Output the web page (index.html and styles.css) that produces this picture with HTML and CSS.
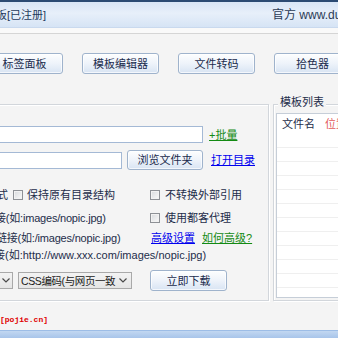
FILE: index.html
```html
<!DOCTYPE html>
<html lang="zh-CN">
<head>
<meta charset="utf-8">
<title>模板下载器</title>
<link rel="stylesheet" href="styles.css">
</head>
<body>
<div class="app">
  <header class="titlebar">
    <span class="title">模板[已注册]</span>
    <span class="site">官方 www.dukesoft.cn</span>
  </header>
  <div class="strip"></div>
  <nav class="toolbar">
    <button class="btn tool first">标签面板</button>
    <button class="btn tool">模板编辑器</button>
    <button class="btn tool">文件转码</button>
    <button class="btn tool">拾色器</button>
  </nav>
  <main class="main">
    <section class="group settings">
      <div class="row r1">
        <span class="input url"></span>
        <a class="link green l-batch">+批量</a>
      </div>
      <div class="row r2">
        <span class="input folder"></span>
        <button class="btn browse">浏览文件夹</button>
        <a class="link blue l-open">打开目录</a>
      </div>
      <div class="row r3">
        <div class="cell left">
          <span class="text cut-a">方式</span>
          <span class="check c-left"></span>
          <span class="text">保持原有目录结构</span>
        </div>
        <div class="cell">
          <span class="check c-right"></span>
          <span class="text">不转换外部引用</span>
        </div>
      </div>
      <div class="row r4">
        <div class="cell left">
          <span class="text tight cut-b">接(如:images/nopic.jpg)</span>
        </div>
        <div class="cell">
          <span class="check c-right"></span>
          <span class="text">使用都客代理</span>
        </div>
      </div>
      <div class="row r5">
        <div class="cell left">
          <span class="text tight cut-c">链接(如:/images/nopic.jpg)</span>
        </div>
        <div class="cell">
          <a class="link blue l-adv">高级设置</a>
          <a class="link green l-how">如何高级?</a>
        </div>
      </div>
      <div class="row r6">
        <span class="text cut-d">接(如:http://www.xxx.com/images/nopic.jpg)</span>
      </div>
      <div class="row r7">
        <div class="select sel-a">
          <span class="sel-text"></span>
          <svg class="chev" width="8" height="5" viewBox="0 0 8 5"><polyline points="0.5,0.5 4,4 7.5,0.5" fill="none" stroke="#4a4a4a" stroke-width="1.2"/></svg>
        </div>
        <div class="select sel-b">
          <span class="sel-text">CSS编码(与网页一致</span>
          <svg class="chev" width="8" height="5" viewBox="0 0 8 5"><polyline points="0.5,0.5 4,4 7.5,0.5" fill="none" stroke="#4a4a4a" stroke-width="1.2"/></svg>
        </div>
        <button class="btn download">立即下载</button>
      </div>
    </section>
    <section class="group templates">
      <span class="legend">模板列表</span>
      <div class="list">
        <div class="list-head">
          <span class="col-name">文件名</span>
          <span class="col-pos">位置</span>
        </div>
        <div class="list-row"></div>
        <div class="list-row"></div>
        <div class="list-row"></div>
        <div class="list-row"></div>
        <div class="list-row"></div>
        <div class="list-row"></div>
        <div class="list-row"></div>
        <div class="list-row"></div>
        <div class="list-row"></div>
        <div class="list-row"></div>
        <div class="list-row"></div>
      </div>
    </section>
  </main>
  <footer class="status">
    <span class="credit">[pojie.cn]</span>
  </footer>
  <div class="bottombar"></div>
</div>
</body>
</html>
```

FILE: styles.css
```css
* { box-sizing: border-box; }

html, body {
  margin: 0;
  padding: 0;
}

body {
  width: 338px;
  height: 338px;
  overflow: hidden;
  background: #f4f4f4;
  font-family: "Liberation Sans", "Noto Sans CJK SC", sans-serif;
  font-size: 11px;
  color: #1e2d4a;
}

.app {
  display: flex;
  flex-direction: column;
  width: 338px;
  height: 338px;
}

/* title bar */
.titlebar {
  flex: none;
  height: 28px;
  display: flex;
  align-items: center;
  border-top: 2px solid #2c4b73;
  border-bottom: 1px solid #c9d9ee;
  background: linear-gradient(#d9e6f6, #e7effa 45%, #d6e4f5);
  white-space: nowrap;
}

.title {
  flex: none;
  margin-left: -15px;
  font-size: 11px;
  line-height: 14px;
  color: #1e395b;
}

.site {
  flex: none;
  width: 66px;
  margin-left: auto;
  overflow: hidden;
  font-size: 12px;
  line-height: 14px;
  color: #2a3a55;
}

.strip {
  flex: none;
  height: 5px;
  background: #f9f9f9;
}

/* toolbar */
.toolbar {
  flex: none;
  display: flex;
  gap: 19px;
  height: 41px;
  padding-top: 19px;
  border-top: 1px solid #d5d5d5;
}

.btn {
  font: inherit;
  color: #1b2c4d;
  padding: 0;
  border: 1px solid #9fb3cc;
  border-radius: 3px;
  background: linear-gradient(#fdfefe, #eef3fa 50%, #d8e4f3);
  box-shadow: inset 0 0 0 1px rgba(255, 255, 255, 0.7);
  line-height: 14px;
}

.tool {
  flex: none;
  width: 77px;
  height: 21px;
}

.tool.first {
  margin-left: -14px;
}

/* main area */
.main {
  flex: none;
  display: flex;
  gap: 4px;
  height: 197px;
  margin-top: 30px;
  margin-left: -10px;
}

.group {
  flex: none;
  border: 1px solid #d2d6db;
  box-shadow: inset 1px 1px 0 #ffffff, 1px 1px 0 #ffffff;
}

.settings {
  width: 279px;
  display: flex;
  flex-direction: column;
  padding: 21px 0 0 9px;
}

.row {
  flex: none;
  display: flex;
  align-items: center;
  white-space: nowrap;
}

.r1 { height: 17px; }
.r2 { height: 20px; margin-top: 7px; }
.r3 { height: 16px; margin-top: 17px; }
.r4 { height: 16px; margin-top: 7px; }
.r5 { height: 16px; margin-top: 4px; }
.r6 { height: 16px; margin-top: 1px; }
.r7 { height: 21px; margin-top: 7px; }

.input {
  flex: none;
  display: block;
  height: 17px;
  background: #ffffff;
  border: 1px solid #a4b9d5;
}

.url {
  width: 243px;
  margin-left: -40px;
}

.folder {
  width: 162px;
  margin-left: -40px;
}

.link {
  flex: none;
  text-decoration: underline;
  line-height: 14px;
  cursor: pointer;
}

.green { color: #138a13; }
.blue { color: #0000ee; }

.l-batch { margin-left: 6px; }
.l-open { margin-left: 8px; }
.l-adv { margin-left: 1px; }
.l-how { margin-left: 7px; }

.browse {
  flex: none;
  width: 76px;
  height: 20px;
  margin-left: 5px;
}

.cell {
  flex: none;
  display: flex;
  align-items: center;
}

.cell.left {
  width: 150px;
}

.text {
  flex: none;
  line-height: 16px;
}

.tight {
  letter-spacing: -0.2px;
}

.cut-a { margin-left: -14px; }
.cut-b { margin-left: -5px; }
.cut-c { margin-left: -4px; }
.cut-d { margin-left: -6px; }

.check {
  flex: none;
  width: 10px;
  height: 10px;
  border: 1px solid #8e9196;
  background: linear-gradient(135deg, #d8dadd, #fafafa);
  box-shadow: inset 0 0 0 1px #f2f2f2;
}

.c-left {
  margin-left: 5px;
  margin-right: 4px;
}

.c-right {
  margin-right: 5px;
}

.select {
  flex: none;
  display: flex;
  align-items: center;
  gap: 2px;
  height: 17px;
  padding: 0 4px 0 2px;
  border: 1px solid #a9a9a9;
  background: linear-gradient(#f3f3f3, #e5e5e5);
  color: #1a1a1a;
}

.sel-a {
  width: 73px;
  margin-left: -60px;
  padding-right: 2px;
}

.sel-b {
  width: 114px;
  margin-left: 5px;
}

.sel-text {
  flex: 1;
  min-width: 0;
  white-space: nowrap;
  font-size: 10.5px;
  letter-spacing: -0.4px;
  line-height: 14px;
}

.chev {
  flex: none;
  display: block;
}

.download {
  flex: none;
  width: 77px;
  height: 21px;
  margin-left: 18px;
}

/* template list */
.templates {
  width: 100px;
  display: flex;
  flex-direction: column;
  padding: 0 0 2px 2px;
}

.legend {
  align-self: flex-start;
  height: 14px;
  margin: -10px 0 0 2px;
  padding: 0 2px;
  line-height: 14px;
  background: #f4f4f4;
  color: #1e2d4a;
}

.list {
  flex: 1;
  margin-top: 4px;
  background: #ffffff;
  border: 1px solid #c6ced8;
  overflow: hidden;
}

.list-head {
  display: flex;
  align-items: center;
  gap: 10px;
  height: 20px;
  padding-left: 5px;
  white-space: nowrap;
  line-height: 14px;
}

.col-pos {
  color: #e25b5b;
}

.list-row {
  height: 14px;
  border-bottom: 1px solid #efefef;
}

/* status */
.status {
  flex: none;
  height: 29px;
  display: flex;
  align-items: center;
  padding-top: 9px;
}

.credit {
  font-family: "Liberation Mono", monospace;
  font-size: 8px;
  font-weight: bold;
  line-height: 10px;
  color: #e00000;
}

.bottombar {
  flex: 1;
  border-top: 1px solid #9dbde6;
  background: linear-gradient(#c2d7f1, #a8c5ea);
}
```
